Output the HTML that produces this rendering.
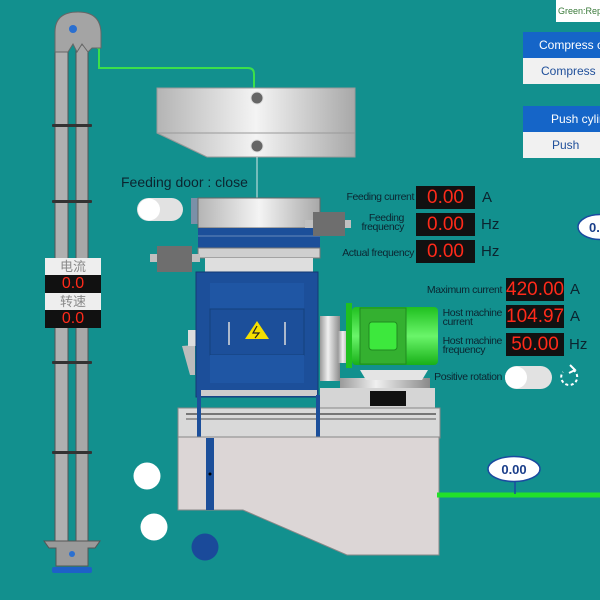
<!DOCTYPE html><html><head><meta charset="utf-8"><style>
body{margin:0;width:600px;height:600px;overflow:hidden;background:#12908e;font-family:"Liberation Sans","Noto Sans CJK SC",sans-serif;position:relative}
.a{position:absolute}
.lb{position:absolute;font-size:10.5px;color:#0b2530;text-align:right;line-height:9px;letter-spacing:-0.4px}
.bx{position:absolute;background:#111;color:#ff2a1a;font-size:19px;text-align:center;line-height:23px}
.u{position:absolute;font-size:15px;color:#0b2530}
.hd{position:absolute;left:523px;width:90px;height:26px;background:#1565c8;color:#fff;font-size:12px;line-height:26px;padding-left:16px;box-sizing:border-box}
.bt{position:absolute;left:523px;width:90px;height:26px;background:#f1f1f1;color:#1f4f9a;font-size:12px;line-height:26px;padding-left:18px;box-sizing:border-box}
</style></head><body>
<svg class="a" style="left:0;top:0" width="600" height="600">
<defs>
<linearGradient id="g1" x1="0" x2="1"><stop offset="0" stop-color="#b4b4b4"/><stop offset=".5" stop-color="#f4f4f4"/><stop offset="1" stop-color="#a8a8a8"/></linearGradient>
<linearGradient id="gm" x1="0" x2="0" y1="0" y2="1"><stop offset="0" stop-color="#20c020"/><stop offset=".5" stop-color="#6af56a"/><stop offset="1" stop-color="#18b018"/></linearGradient>
<linearGradient id="gc" x1="0" x2="1"><stop offset="0" stop-color="#9a9a9a"/><stop offset=".4" stop-color="#f0f0f0"/><stop offset="1" stop-color="#8a8a8a"/></linearGradient>
</defs>
<path d="M97 48 H99 V68 H248 Q254 68 254 74 V90" fill="none" stroke="#3ce04a" stroke-width="2"/>
<rect x="55" y="45" width="13" height="500" fill="#b0b0b0" stroke="#555" stroke-width="1"/>
<rect x="76" y="45" width="12" height="500" fill="#a8a8a8" stroke="#555" stroke-width="1"/>
<path d="M55 48 V32 Q55 12 78 12 Q101 12 101 34 V48 H92 L88 52 L82 44 L77 52 L73 44 L68 52 L55 52 Z" fill="#a4a4a4" stroke="#666"/>
<circle cx="73" cy="29" r="4" fill="#2a6fd0"/>
<g fill="#333"><rect x="52" y="124" width="40" height="3" rx="1"/><rect x="52" y="200" width="40" height="3" rx="1"/><rect x="52" y="361" width="40" height="3" rx="1"/><rect x="52" y="451" width="40" height="3" rx="1"/></g>
<path d="M44 541 H100 L95 548 H88 V566 H56 V548 H49 Z" fill="#9a9a9a" stroke="#555"/>
<circle cx="72" cy="554" r="3" fill="#2a6fd0"/>
<rect x="52" y="567" width="40" height="6" rx="2" fill="#1e60c8"/>
<rect x="157" y="88" width="198" height="45" fill="url(#g1)" stroke="#999"/>
<path d="M157 133 H355 V157 H207 Z" fill="url(#g1)" stroke="#999"/>
<g fill="#666" stroke="#ddd"><circle cx="257" cy="98" r="6"/><circle cx="257" cy="146" r="6"/></g>
<line x1="257" y1="157" x2="257" y2="198" stroke="#d8e8e8" stroke-width="1"/>
<rect x="137" y="198" width="46" height="23" rx="11.5" fill="#e2e2e2"/><circle cx="149" cy="209.5" r="11" fill="#fff"/>
<rect x="191" y="198" width="8" height="26" fill="#7a90a8"/>
<rect x="198" y="198" width="122" height="30" fill="url(#g1)" stroke="#666"/>
<rect x="198" y="228" width="122" height="20" fill="#1c4f9a"/>
<line x1="198" y1="236" x2="320" y2="236" stroke="#6688bb"/>
<rect x="198" y="248" width="122" height="10" fill="#cfcfcf" stroke="#777"/>
<rect x="205" y="258" width="108" height="14" fill="#dedede"/>
<rect x="150" y="254" width="50" height="8" fill="#c0c0c0"/>
<rect x="157" y="246" width="35" height="26" fill="#6e6e6e"/>
<rect x="305" y="220" width="46" height="8" fill="#c0c0c0"/>
<rect x="313" y="212" width="32" height="24" fill="#6e6e6e"/>
<path d="M182 346 L195 345 V375 H190 Z" fill="#bcbcbc"/>
<rect x="188" y="330" width="12" height="16" fill="#ddd"/>
<rect x="196" y="272" width="122" height="125" fill="#1c4f9a" stroke="#133a74"/>
<rect x="210" y="283" width="94" height="26" fill="#1f56a4"/>
<rect x="210" y="309" width="94" height="46" fill="#1c4f9a" stroke="#13407c"/>
<rect x="210" y="355" width="94" height="28" fill="#1f56a4"/>
<line x1="229" y1="322" x2="229" y2="345" stroke="#ddd" stroke-width="1.5"/><line x1="285" y1="322" x2="285" y2="345" stroke="#ddd" stroke-width="1.5"/>
<path d="M257 321 L269 339 H245 Z" fill="#f4e000"/><path d="M257 326 L253 333 H259 L255 338" fill="none" stroke="#222" stroke-width="1.2"/>
<rect x="201" y="390" width="116" height="6" fill="#ccc"/>
<rect x="320" y="316" width="20" height="65" fill="url(#gc)"/>
<rect x="338" y="331" width="12" height="32" fill="url(#gc)"/>
<rect x="340" y="378" width="90" height="14" fill="url(#gc)"/>
<rect x="346" y="303" width="6" height="65" fill="#20c020"/>
<rect x="352" y="307" width="86" height="58" rx="4" fill="url(#gm)"/>
<rect x="360" y="308" width="46" height="56" fill="#34b030" stroke="#1f8a1f"/>
<rect x="369" y="322" width="28" height="28" rx="3" fill="#3de83d" stroke="#1f8a1f"/>
<path d="M360 370 H428 L422 380 H366 Z" fill="#e4e4e4"/>
<rect x="320" y="388" width="115" height="24" fill="#d5d5d5"/>
<rect x="370" y="391" width="36" height="15" fill="#111"/>
<rect x="178" y="408" width="262" height="30" fill="#d9d9d9" stroke="#888"/>
<line x1="186" y1="414" x2="436" y2="414" stroke="#555" stroke-width="1.5"/>
<line x1="186" y1="419" x2="436" y2="419" stroke="#555" stroke-width="1"/>
<rect x="197" y="395" width="4" height="64" fill="#1c4f9a"/><rect x="316" y="395" width="4" height="64" fill="#1c4f9a"/>
<path d="M178 437 H439 V555 H347 L243 510 H178 Z" fill="#dcd6d6" stroke="#888"/>
<rect x="206" y="438" width="8" height="72" fill="#1c4f9a"/>
<circle cx="210" cy="474" r="1.5" fill="#000"/>
<circle cx="147" cy="476" r="13.5" fill="#fff"/><circle cx="154" cy="527" r="13.5" fill="#fff"/><circle cx="205" cy="547" r="13.5" fill="#1a4a9a"/>
<line x1="437" y1="495" x2="600" y2="495" stroke="#22e02a" stroke-width="5"/>
<line x1="515" y1="481" x2="515" y2="494" stroke="#1a4aa0" stroke-width="1.5"/>
<ellipse cx="514" cy="469" rx="26" ry="12.5" fill="#fff" stroke="#1a4aa0" stroke-width="1.5"/>
<text x="514" y="474" font-size="13" font-weight="bold" fill="#1a3e8a" text-anchor="middle" font-family="Liberation Sans">0.00</text>
<ellipse cx="600" cy="227" rx="22" ry="12.5" fill="#fff" stroke="#1a4aa0" stroke-width="1.5"/>
<text x="589" y="232" font-size="13" font-weight="bold" fill="#1a3e8a" font-family="Liberation Sans">0.</text>
<rect x="505" y="366" width="47" height="23" rx="11.5" fill="#e2e2e2"/><circle cx="516" cy="377.5" r="11" fill="#fff"/>
<path d="M573 370 A8 8 0 1 1 563 372" fill="none" stroke="#fff" stroke-width="2" stroke-dasharray="3 2.5"/>
<path d="M570 365 L575 370 L569 373" fill="none" stroke="#fff" stroke-width="2"/>
</svg>
<div class="a" style="left:45px;top:258px;width:56px;height:17px;background:#eee;color:#888;font-size:13px;text-align:center;line-height:17px">电流</div>
<div class="a" style="left:45px;top:275px;width:56px;height:18px;background:#111;color:#ff2a1a;font-size:16px;text-align:center;line-height:18px">0.0</div>
<div class="a" style="left:45px;top:293px;width:56px;height:17px;background:#eee;color:#888;font-size:13px;text-align:center;line-height:17px">转速</div>
<div class="a" style="left:45px;top:310px;width:56px;height:18px;background:#111;color:#ff2a1a;font-size:16px;text-align:center;line-height:18px">0.0</div>
<div class="a" style="left:121px;top:174px;font-size:14px;color:#0b2530">Feeding door : close</div>
<div class="lb" style="right:186px;top:193px">Feeding current</div>
<div class="lb" style="right:196px;top:214px">Feeding<br>frequency</div>
<div class="lb" style="right:186px;top:249px">Actual frequency</div>
<div class="bx" style="left:416px;top:186px;width:59px">0.00</div>
<div class="bx" style="left:416px;top:213px;width:59px">0.00</div>
<div class="bx" style="left:416px;top:240px;width:59px">0.00</div>
<div class="u" style="left:482px;top:189px">A</div><div class="u" style="left:481px;top:216px">Hz</div><div class="u" style="left:481px;top:243px">Hz</div>
<div class="lb" style="right:98px;top:286px">Maximum current</div>
<div class="lb" style="right:98px;top:309px;text-align:left">Host machine<br>current</div>
<div class="lb" style="right:98px;top:337px;text-align:left">Host machine<br>frequency</div>
<div class="bx" style="left:506px;top:278px;width:58px">420.00</div>
<div class="bx" style="left:506px;top:305px;width:58px">104.97</div>
<div class="bx" style="left:506px;top:333px;width:58px">50.00</div>
<div class="u" style="left:570px;top:281px">A</div><div class="u" style="left:570px;top:308px">A</div><div class="u" style="left:569px;top:336px">Hz</div>
<div class="lb" style="right:98px;top:373px">Positive rotation</div>
<div class="a" style="left:556px;top:0;width:50px;height:22px;background:#fff;color:#3a7a3a;font-size:9px;line-height:22px;padding-left:2px;white-space:nowrap;overflow:hidden">Green:Repr</div>
<div class="hd" style="top:32px;white-space:nowrap">Compress cyli</div>
<div class="bt" style="top:58px">Compress</div>
<div class="hd" style="top:106px;padding-left:28px;white-space:nowrap">Push cylind</div>
<div class="bt" style="top:132px;padding-left:29px">Push</div>
</body></html>
